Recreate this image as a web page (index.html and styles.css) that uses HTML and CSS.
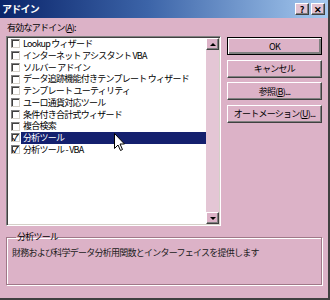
FILE: index.html
```html
<!DOCTYPE html>
<html lang="ja">
<head>
    <meta charset="UTF-8">
    <title>アドイン</title>
    <link rel="stylesheet" href="styles.css">
</head>
<body>
    <div class="dialog">
        <div class="titlebar">
            <span class="title">アドイン</span>
            <div class="tb-buttons">
                <span class="tb-btn">?</span>
                <span class="tb-btn">✕</span>
            </div>
        </div>

        <div class="content">
            <div class="label">有効なアドイン(<u>A</u>):</div>

            <div class="main">
                <div class="listbox">
                    <ul class="items">
                        <li class="item"><span class="check"></span><span class="name">Lookup ウィザード</span></li>
                        <li class="item"><span class="check"></span><span class="name">インターネット アシスタント VBA</span></li>
                        <li class="item"><span class="check"></span><span class="name">ソルバー アドイン</span></li>
                        <li class="item"><span class="check"></span><span class="name">データ追跡機能付きテンプレート ウィザード</span></li>
                        <li class="item"><span class="check"></span><span class="name">テンプレート ユーティリティ</span></li>
                        <li class="item"><span class="check"></span><span class="name">ユーロ通貨対応ツール</span></li>
                        <li class="item"><span class="check"></span><span class="name">条件付き合計式ウィザード</span></li>
                        <li class="item"><span class="check"></span><span class="name">複合検索</span></li>
                        <li class="item selected"><span class="check checked">✓</span><span class="name">分析ツール</span></li>
                        <li class="item"><span class="check checked">✓</span><span class="name">分析ツール - VBA</span></li>
                    </ul>
                    <div class="scrollbar">
                        <div class="sb-btn"><span class="arrow up"></span></div>
                        <div class="sb-track"></div>
                        <div class="sb-btn"><span class="arrow down"></span></div>
                    </div>
                </div>

                <div class="buttons">
                    <div class="btn default">OK</div>
                    <div class="btn">キャンセル</div>
                    <div class="btn">参照(<u>B</u>)...</div>
                    <div class="btn">オートメーション(<u>U</u>)...</div>
                </div>
            </div>

            <fieldset class="group">
                <legend>分析ツール</legend>
                <p class="desc">財務および科学データ分析用関数とインターフェイスを提供します</p>
            </fieldset>
        </div>

        <svg class="cursor" width="11" height="19" viewBox="0 0 11 19">
            <path d="M0.5 0.5 L0.5 15.5 L4 12 L6.5 17.5 L8.5 16.5 L6 11 L10.5 11 Z" fill="#fff" stroke="#000" stroke-width="1"/>
        </svg>
    </div>
</body>
</html>
```

FILE: styles.css
```css
body {
    margin: 0;
    font-family: "Noto Sans CJK JP", "Liberation Sans", sans-serif;
    font-size: 9px;
    letter-spacing: -0.75px;
    color: #000;
}
.dialog {
    position: relative;
    width: 330px;
    height: 300px;
    box-sizing: border-box;
    border-right: 2px solid #404040;
    border-bottom: 2px solid #404040;
    background-color: #dcb2c7;
}
.titlebar {
    height: 18px;
    display: flex;
    align-items: center;
    justify-content: space-between;
    padding: 0 3px 0 2px;
    background: linear-gradient(to right, #0a246a, #3c64a8 45%, #a6caf0);
}
.title {
    color: #fff;
    font-weight: bold;
    font-size: 10px;
    line-height: 18px;
}
.tb-buttons {
    display: flex;
    gap: 2px;
}
.tb-btn {
    width: 14px;
    height: 12px;
    box-sizing: border-box;
    display: flex;
    align-items: center;
    justify-content: center;
    font-size: 9px;
    font-weight: bold;
    letter-spacing: 0;
    line-height: 1;
    background: #e2c2d2;
    border: 1px solid;
    border-color: #fff #404040 #404040 #fff;
    box-shadow: inset -1px -1px 0 #808080;
}
.content {
    padding: 3px 6px 0 6px;
}
.label {
    line-height: 14px;
    height: 14px;
    padding-left: 1px;
}
.main {
    display: flex;
    gap: 6px;
    margin-top: 1px;
}
.listbox {
    width: 215px;
    height: 190px;
    flex: none;
    box-sizing: border-box;
    display: flex;
    border: 1px solid;
    border-color: #808080 #fff #fff #808080;
    box-shadow: inset 1px 1px 0 #404040, inset -1px -1px 0 #d4d0c8;
    padding: 1px;
}
.items {
    list-style: none;
    margin: 0;
    padding: 0;
    flex: 1;
    min-width: 0;
    overflow: hidden;
    background: #fff;
}
.item {
    height: 11.75px;
    display: flex;
    align-items: center;
    white-space: nowrap;
}
.check {
    flex: none;
    width: 9px;
    height: 9px;
    box-sizing: border-box;
    margin-left: 3px;
    border: 1px solid;
    border-color: #808080 #d4d0c8 #d4d0c8 #808080;
    box-shadow: inset 1px 1px 0 #404040;
    background: #fff;
    display: flex;
    align-items: center;
    justify-content: center;
    font-size: 8px;
    font-weight: bold;
    letter-spacing: 0;
    line-height: 1;
}
.name {
    flex: 1;
    min-width: 0;
    margin-left: 1px;
    padding-left: 2px;
    line-height: 11.75px;
    height: 11.75px;
}
.selected .name {
    background: #14206e;
    color: #fff;
}
.scrollbar {
    flex: none;
    width: 13px;
    display: flex;
    flex-direction: column;
    background-color: #e4c6d5;
}
.sb-btn {
    height: 12px;
    box-sizing: border-box;
    display: flex;
    align-items: center;
    justify-content: center;
    background: #dcb2c7;
    border: 1px solid;
    border-color: #fff #404040 #404040 #fff;
    box-shadow: inset -1px -1px 0 #808080;
}
.sb-track {
    flex: 1;
}
.arrow {
    width: 0;
    height: 0;
    border-left: 3px solid transparent;
    border-right: 3px solid transparent;
}
.arrow.up {
    border-bottom: 3px solid #000;
}
.arrow.down {
    border-top: 3px solid #000;
}
.buttons {
    width: 95px;
    flex: none;
    display: flex;
    flex-direction: column;
    gap: 4.5px;
    margin-top: 1px;
}
.btn {
    height: 18px;
    box-sizing: border-box;
    display: flex;
    align-items: center;
    justify-content: center;
    border: 1px solid;
    border-color: #fff #404040 #404040 #fff;
    box-shadow: inset -1px -1px 0 #808080;
    white-space: nowrap;
}
.btn.default {
    border: 1px solid #000;
    box-shadow: inset 1px 1px 0 #fff, inset -2px -2px 0 #808080;
}
.group {
    margin: 5px 0 0 0;
    padding: 3px 5px 0 5px;
    height: 54px;
    width: 316px;
    box-sizing: border-box;
    border: 1px solid #a07888;
    box-shadow: inset 1px 1px 0 #fff, 1px 1px 0 #fff;
}
.group legend {
    padding: 0 1px;
    margin-left: 4px;
    line-height: 12px;
}
.desc {
    margin: 0;
    line-height: 14px;
    color: #202020;
    white-space: nowrap;
}
.cursor {
    position: absolute;
    left: 114px;
    top: 133px;
}
```
